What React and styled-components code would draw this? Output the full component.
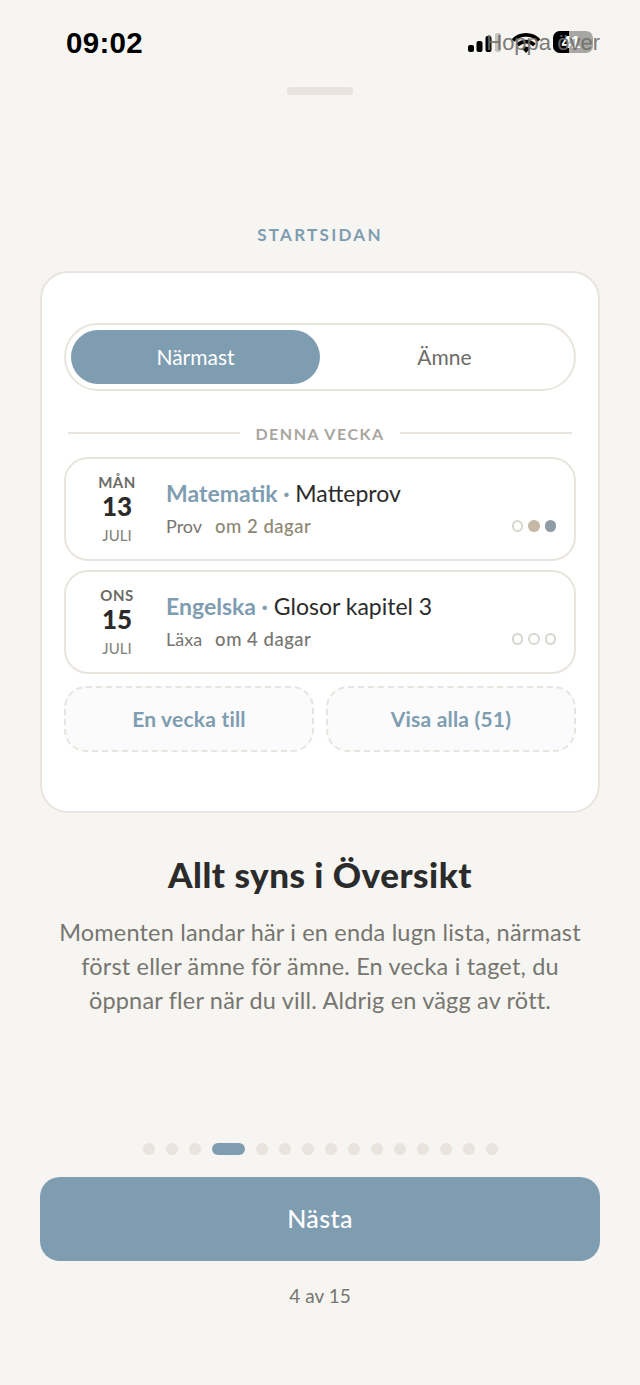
import React from 'react'
import styled, { createGlobalStyle } from 'styled-components'

const GlobalStyle = createGlobalStyle`
  html, body {
    margin: 0;
    padding: 0;
    background: #f6f5f1;
  }
  * {
    box-sizing: border-box;
  }
`

const Page = styled.div`
  position: relative;
  width: 640px;
  height: 1385px;
  padding: 0 40px;
  display: flex;
  flex-direction: column;
  align-items: center;
  background: #f6f5f1;
  font-family: 'Lato', 'Noto Sans', sans-serif;
  color: #2b2b2b;
  overflow: hidden;
`

const StatusBar = styled.div`
  width: 100%;
  height: 87px;
  flex: none;
  padding: 26px 0 0 26px;
  display: flex;
  justify-content: space-between;
  align-items: flex-start;
`

const Clock = styled.div`
  font-family: 'Liberation Sans', sans-serif;
  font-size: 29.5px;
  font-weight: 700;
  line-height: 34px;
  color: #000;
  letter-spacing: 0.3px;
`

const StatusIcons = styled.svg`
  display: block;
  margin-top: 4px;
`

const BatteryText = styled.text`
  font-family: 'Liberation Sans', sans-serif;
  font-size: 17px;
  font-weight: 700;
  fill: #fff;
`

const Skip = styled.div`
  position: absolute;
  top: 30px;
  right: 40px;
  font-family: 'Liberation Sans', sans-serif;
  font-size: 22px;
  line-height: 26px;
  color: #6f6e69;
  opacity: 0.9;
`

const Handle = styled.div`
  width: 66px;
  height: 8px;
  flex: none;
  border-radius: 4px;
  background: #e8e3dc;
`

const Eyebrow = styled.div`
  margin-top: 130px;
  font-size: 17px;
  line-height: 20px;
  font-weight: 700;
  letter-spacing: 2.3px;
  color: #7f9db1;
`

const Card = styled.div`
  width: 560px;
  height: 542px;
  margin-top: 26px;
  flex: none;
  padding: 50px 22px 0;
  background: #fff;
  border: 2px solid #e9e5de;
  border-radius: 28px;
  display: flex;
  flex-direction: column;
`

const Segment = styled.div`
  height: 68px;
  flex: none;
  padding: 5px;
  border: 2px solid #e9e5de;
  border-radius: 34px;
  display: grid;
  grid-template-columns: 1fr 1fr;
`

const SegmentTab = styled.div`
  display: flex;
  align-items: center;
  justify-content: center;
  padding-bottom: 1px;
  border-radius: 27px;
  font-size: 21px;
  color: ${p => (p.$active ? '#fff' : '#6c6b66')};
  background: ${p => (p.$active ? '#7f9db1' : 'transparent')};
`

const Divider = styled.div`
  height: 20px;
  margin: 32px 4px 14px;
  flex: none;
  display: flex;
  align-items: center;
  gap: 15px;
  font-size: 16px;
  font-weight: 700;
  letter-spacing: 1.5px;
  color: #a8a69f;
  &::before, &::after {
    content: '';
    flex: 1;
    height: 2px;
    background: #e9e5de;
  }
`

const Rows = styled.div`
  display: flex;
  flex-direction: column;
  gap: 9px;
`

const Row = styled.div`
  height: 104px;
  padding-left: 16px;
  padding-right: 18px;
  border: 2px solid #e9e5de;
  border-radius: 24px;
  display: flex;
  align-items: center;
`

const DateBox = styled.div`
  width: 70px;
  flex: none;
  padding-bottom: 2px;
  display: flex;
  flex-direction: column;
  align-items: center;
`

const Weekday = styled.div`
  font-size: 15px;
  line-height: 18px;
  font-weight: 700;
  letter-spacing: 0.5px;
  color: #6c6b66;
`

const DayNum = styled.div`
  font-size: 26px;
  line-height: 30px;
  font-weight: 900;
  color: #2b2b2b;
`

const Month = styled.div`
  margin-top: 5px;
  font-size: 15px;
  line-height: 18px;
  color: #7e7d78;
`

const RowBody = styled.div`
  flex: 1;
  min-width: 0;
  margin-left: 14px;
  padding-bottom: 3px;
  display: flex;
  flex-direction: column;
  gap: 8px;
`

const RowTitle = styled.div`
  font-size: 23px;
  line-height: 28px;
  color: #2b2b2b;
  white-space: nowrap;
`

const Subject = styled.span`
  font-weight: 700;
  color: #7f9db1;
`

const RowMeta = styled.div`
  height: 22px;
  display: flex;
  align-items: center;
  font-size: 18px;
  line-height: 22px;
  color: #76756f;
`

const Due = styled.span`
  margin-left: 13px;
  font-size: 18.5px;
  font-weight: 500;
  letter-spacing: 0.5px;
  color: ${p => p.$color};
`

const Marks = styled.div`
  margin-left: auto;
  padding-top: 1px;
  display: flex;
  gap: 5px;
`

const Mark = styled.span`
  width: 11.5px;
  height: 11.5px;
  border-radius: 50%;
  border: ${p => (p.$fill ? 'none' : '2.5px solid #d9d6cf')};
  background: ${p => p.$fill || 'transparent'};
`

const MoreRow = styled.div`
  margin-top: 12px;
  display: grid;
  grid-template-columns: 1fr 1fr;
  gap: 12px;
`

const MoreButton = styled.div`
  height: 66px;
  padding-bottom: 2px;
  display: flex;
  align-items: center;
  justify-content: center;
  border: 2px dashed #e9e5de;
  border-radius: 22px;
  background: #fafbfa;
  font-size: 21px;
  font-weight: 700;
  letter-spacing: 0.2px;
  color: #7f9db1;
`

const Title = styled.h1`
  margin: 39px 0 0;
  font-size: 35px;
  line-height: 44px;
  font-weight: 900;
  letter-spacing: 0.5px;
  color: #2b2b2b;
`

const Text = styled.p`
  width: 540px;
  margin: 19px 0 0;
  text-align: center;
  font-size: 23.5px;
  line-height: 34px;
  letter-spacing: 0.18px;
  color: #76756f;
`

const Dots = styled.div`
  margin-top: 126px;
  height: 12px;
  flex: none;
  display: flex;
  gap: 11px;
`

const Dot = styled.span`
  width: ${p => (p.$active ? '33px' : '12px')};
  height: 12px;
  border-radius: 6px;
  background: ${p => (p.$active ? '#7f9db1' : '#e8e3dc')};
`

const NextButton = styled.div`
  width: 560px;
  height: 84px;
  margin-top: 22px;
  padding-bottom: 2px;
  flex: none;
  display: flex;
  align-items: center;
  justify-content: center;
  border-radius: 20px;
  background: #7f9db1;
  font-size: 25px;
  font-weight: 500;
  letter-spacing: 0.4px;
  color: #fff;
`

const Counter = styled.div`
  margin-top: 23px;
  font-size: 19px;
  line-height: 24px;
  color: #76756f;
`

const StatusGlyphs = () => (
  <StatusIcons width="136" height="30" viewBox="0 0 136 30">
    <rect x="4" y="15" width="6" height="7" rx="2" fill="#000" />
    <rect x="12.5" y="11" width="6" height="11" rx="2" fill="#000" />
    <rect x="21.5" y="6" width="6" height="16" rx="2" fill="#000" />
    <rect x="31" y="3" width="6" height="19" rx="2" fill="#000" opacity="0.2" />
    <g fill="none" stroke="#000" strokeWidth="3.8">
      <path d="M49 10.5 C56 3 68 3 75 10.5" />
      <path d="M53.5 15 C58 10.5 66 10.5 70.5 15" />
    </g>
    <path d="M58 18.5 C60.5 16 63.5 16 66 18.5 L62 23 Z" fill="#000" />
    <rect x="89" y="1" width="40" height="22" rx="7" fill="#000" opacity="0.32" />
    <path d="M96 1 H105 V23 H96 A7 7 0 0 1 89 16 V8 A7 7 0 0 1 96 1 Z" fill="#000" />
    <BatteryText x="107" y="18" textAnchor="middle">41</BatteryText>
  </StatusIcons>
)

const items = [
  { weekday: 'MÅN', day: '13', subject: 'Matematik', title: 'Matteprov', kind: 'Prov', due: 'om 2 dagar', dueColor: '#8d8672', marks: [null, '#c4b8a6', '#8f9ba5'] },
  { weekday: 'ONS', day: '15', subject: 'Engelska', title: 'Glosor kapitel 3', kind: 'Läxa', due: 'om 4 dagar', dueColor: '#76756f', marks: [null, null, null] },
]

const App = () => {
  return (
    <Page>
      <GlobalStyle />
      <StatusBar>
        <Clock>09:02</Clock>
        <StatusGlyphs />
      </StatusBar>
      <Skip>Hoppa över</Skip>
      <Handle />
      <Eyebrow>STARTSIDAN</Eyebrow>
      <Card>
        <Segment>
          <SegmentTab $active>Närmast</SegmentTab>
          <SegmentTab>Ämne</SegmentTab>
        </Segment>
        <Divider>DENNA VECKA</Divider>
        <Rows>
          {items.map(item => (
            <Row key={item.day}>
              <DateBox>
                <Weekday>{item.weekday}</Weekday>
                <DayNum>{item.day}</DayNum>
                <Month>JULI</Month>
              </DateBox>
              <RowBody>
                <RowTitle><Subject>{item.subject} ·</Subject> {item.title}</RowTitle>
                <RowMeta>
                  {item.kind}
                  <Due $color={item.dueColor}>{item.due}</Due>
                  <Marks>
                    {item.marks.map((m, i) => <Mark key={i} $fill={m} />)}
                  </Marks>
                </RowMeta>
              </RowBody>
            </Row>
          ))}
        </Rows>
        <MoreRow>
          <MoreButton>En vecka till</MoreButton>
          <MoreButton>Visa alla (51)</MoreButton>
        </MoreRow>
      </Card>
      <Title>Allt syns i Översikt</Title>
      <Text>Momenten landar här i en enda lugn lista, närmast först eller ämne för ämne. En vecka i taget, du öppnar fler när du vill. Aldrig en vägg av rött.</Text>
      <Dots>
        {Array.from({ length: 15 }, (_, i) => <Dot key={i} $active={i === 3} />)}
      </Dots>
      <NextButton>Nästa</NextButton>
      <Counter>4 av 15</Counter>
    </Page>
  )
}

export default App
